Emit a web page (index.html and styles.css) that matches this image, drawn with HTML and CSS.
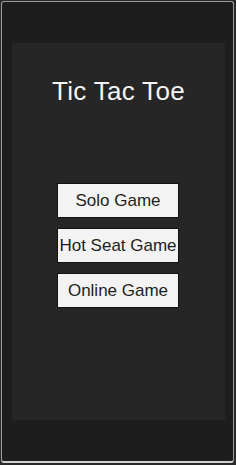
FILE: index.html
```html
<!DOCTYPE html>
<html lang="en">
<head>
    <meta charset="UTF-8">
    <meta name="viewport" content="width=device-width, initial-scale=1.0">
    <title>Tic Tac Toe</title>
    <link rel="stylesheet" href="styles.css">
</head>
<body>
    <div class="device-frame">
        <div class="menu-panel">
            <h1 class="title">Tic Tac Toe</h1>
            <div class="menu-buttons">
                <button class="menu-btn">Solo Game</button>
                <button class="menu-btn">Hot Seat Game</button>
                <button class="menu-btn">Online Game</button>
            </div>
        </div>
    </div>
</body>
</html>
```

FILE: styles.css
```css
body {
    font-family: "Liberation Sans", Arial, sans-serif;
    background-color: #2a2a2a;
    margin: 0;
    padding: 1px 0 0 1px;
    width: 236px;
    height: 465px;
    box-sizing: border-box;
}

.device-frame {
    width: 233px;
    height: 462px;
    box-sizing: border-box;
    background-color: #1d1d1d;
    border: 1px solid #9c9c9c;
    border-bottom: 2px solid #d0d0d0;
    border-radius: 3px;
    padding: 41px 8px 0 10px;
}

.menu-panel {
    height: 377px;
    background-color: #262626;
    display: flex;
    flex-direction: column;
    align-items: center;
}

.title {
    margin: 34px 0 0 0;
    font-size: 26px;
    line-height: 28px;
    letter-spacing: 0.3px;
    font-weight: normal;
    color: #f4f4f4;
}

.menu-buttons {
    margin-top: 78px;
    margin-right: 1px;
    display: flex;
    flex-direction: column;
    gap: 10px;
}

.menu-btn {
    width: 122px;
    height: 35px;
    padding: 0;
    font-family: "Liberation Sans", Arial, sans-serif;
    font-size: 17px;
    white-space: nowrap;
    color: #1e1e1e;
    background-color: #f3f3f3;
    border: 1px solid #111;
    border-radius: 0;
    cursor: pointer;
}

.menu-btn:hover {
    background-color: #ffffff;
}
```
